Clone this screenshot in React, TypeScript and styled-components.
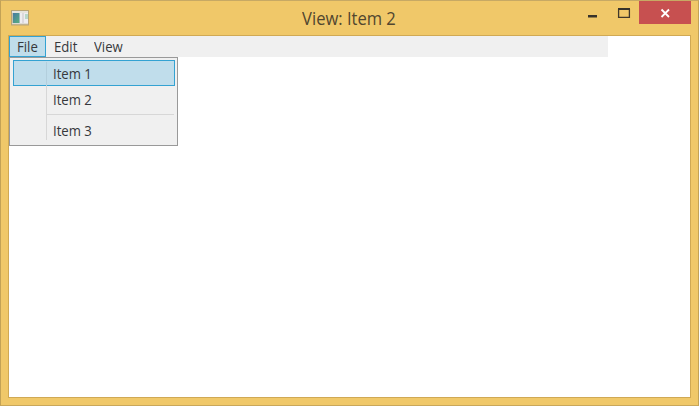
import React from "react";
import styled, { createGlobalStyle } from "styled-components";

const GlobalStyle = createGlobalStyle`
  * { box-sizing: border-box; }
  body {
    margin: 0;
    overflow: hidden;
    font-family: "Open Sans", "Noto Sans", sans-serif;
    font-size: 14px;
    color: #36383c;
    cursor: default;
  }
`;

const WindowFrame = styled.div`
  display: flex;
  flex-direction: column;
  width: 699px;
  height: 406px;
  padding: 0 7px 7px;
  background: #f0c869;
  border: 1px solid #c3a256;
  border-top-color: #c7a964;
  border-bottom-color: #c9a75a;
`;

const TitleBar = styled.header`
  display: grid;
  grid-template-columns: 110px 1fr 112px;
  height: 34px;
  flex: none;
`;

const AppIcon = styled.svg`
  display: block;
  margin: 9px 0 0 3px;
`;

const Title = styled.h1`
  margin: 0;
  text-align: center;
  font-size: 18px;
  font-weight: 400;
  line-height: 34px;
  color: #51462f;
  white-space: nowrap;
`;

const TitleText = styled.span`
  display: inline-block;
  transform: scaleX(0.92);
`;

const WindowControls = styled.div`
  display: flex;
  justify-content: flex-end;
  align-items: flex-start;
`;

const ControlButton = styled.button<{ $close?: boolean }>`
  width: ${(p) => (p.$close ? 52 : 31)}px;
  height: ${(p) => (p.$close ? 23 : 24)}px;
  padding: 0;
  border: 0;
  background: ${(p) => (p.$close ? "#c75050" : "transparent")};
  svg { display: block; }
`;

const Client = styled.main`
  flex: 1;
  background: #fff;
  border: 1px solid #d0a954;
`;

const MenuBar = styled.nav`
  display: flex;
  width: 599px;
  height: 21px;
  background: #f0f0f0;
`;

const MenuHeading = styled.div<{ $open?: boolean; $width: number }>`
  width: ${(p) => p.$width}px;
  height: 21px;
  padding-left: 7px;
  line-height: 20px;
  border: 1px solid ${(p) => (p.$open ? "#34a2d2" : "transparent")};
  background: ${(p) => (p.$open ? "#c0ddeb" : "transparent")};
`;

const Label = styled.span<{ $scale?: number }>`
  display: inline-block;
  transform: scaleX(${(p) => p.$scale ?? 0.94});
  transform-origin: left;
  white-space: nowrap;
`;

const Popup = styled.div`
  width: 169px;
  height: 89px;
  padding: 2px 2px 2px 3px;
  background: #f0f0f0;
  border: 1px solid #999;
`;

const MenuItem = styled.div<{ $active?: boolean }>`
  display: grid;
  grid-template-columns: 33px 1fr;
  width: 162px;
  height: 26px;
  line-height: 25px;
  border: 1px solid ${(p) => (p.$active ? "#34a2d2" : "transparent")};
  background: ${(p) => (p.$active ? "#c0ddeb" : "transparent")};
`;

const Gutter = styled.div<{ $active?: boolean; $tall?: number }>`
  height: ${(p) => p.$tall ?? 26}px;
  margin-top: ${(p) => (p.$active ? 1 : -1)}px;
  border-right: 1px solid ${(p) => (p.$active ? "#b3cfdd" : "#d7d7d7")};
`;

const ItemText = styled.div`
  padding-left: 6px;
`;

const Separator = styled.div`
  display: grid;
  grid-template-columns: 34px 1fr;
  height: 5px;
`;

const SeparatorGutter = styled.div`
  border-right: 1px solid #d7d7d7;
`;

const SeparatorLine = styled.div`
  height: 1px;
  margin: 2px 1px 0 0;
  background: #d7d7d7;
`;

export default function App() {
  return (
    <>
      <GlobalStyle />
      <WindowFrame>
        <TitleBar>
          <AppIcon width="20" height="17" viewBox="0 0 20 17">
            <defs>
              <linearGradient id="pane" x1="0" y1="0" x2="1" y2="1">
                <stop offset="0" stopColor="#4879a5" />
                <stop offset="1" stopColor="#5ab27b" />
              </linearGradient>
            </defs>
            <rect x="0.5" y="0.5" width="17" height="14.5" fill="#c9c0aa" stroke="#b7a476" />
            <rect x="1" y="1" width="16" height="2" fill="#e6e4de" />
            <rect x="2" y="3" width="15" height="10" fill="#eeedf0" />
            <rect x="2" y="3" width="7" height="10" fill="url(#pane)" />
            <rect x="8" y="3" width="1" height="10" fill="#9bb9bb" />
            <rect x="11" y="3" width="2" height="10" fill="#dcd9dd" />
            <rect x="14" y="4" width="3" height="5" fill="#b8d7ca" />
            <rect x="1" y="13" width="16" height="1" fill="#dedbd2" />
          </AppIcon>
          <Title><TitleText>View: Item 2</TitleText></Title>
          <WindowControls>
            <ControlButton aria-label="Minimize">
              <svg width="31" height="24"><rect x="11" y="14" width="9" height="2.5" fill="#38332a" /></svg>
            </ControlButton>
            <ControlButton aria-label="Maximize">
              <svg width="31" height="24">
                <path d="M10.6 8V16.3H21.4V8" fill="none" stroke="#40382a" strokeWidth="1.3" />
                <rect x="10" y="7" width="12" height="2" fill="#38332a" />
              </svg>
            </ControlButton>
            <ControlButton $close aria-label="Close">
              <svg width="52" height="23"><path d="M22.5 8.5L30 16M30 8.5L22.5 16" stroke="#fff" strokeWidth="1.8" /></svg>
            </ControlButton>
          </WindowControls>
        </TitleBar>
        <Client>
          <MenuBar>
            <MenuHeading $open $width={37}><Label>File</Label></MenuHeading>
            <MenuHeading $width={40}><Label>Edit</Label></MenuHeading>
            <MenuHeading $width={46}><Label>View</Label></MenuHeading>
          </MenuBar>
          <Popup>
            <MenuItem $active><Gutter $active $tall={24} /><ItemText><Label>Item 1</Label></ItemText></MenuItem>
            <MenuItem><Gutter /><ItemText><Label>Item 2</Label></ItemText></MenuItem>
            <Separator><SeparatorGutter /><SeparatorLine /></Separator>
            <MenuItem><Gutter $tall={23} /><ItemText><Label>Item 3</Label></ItemText></MenuItem>
          </Popup>
        </Client>
      </WindowFrame>
    </>
  );
}
